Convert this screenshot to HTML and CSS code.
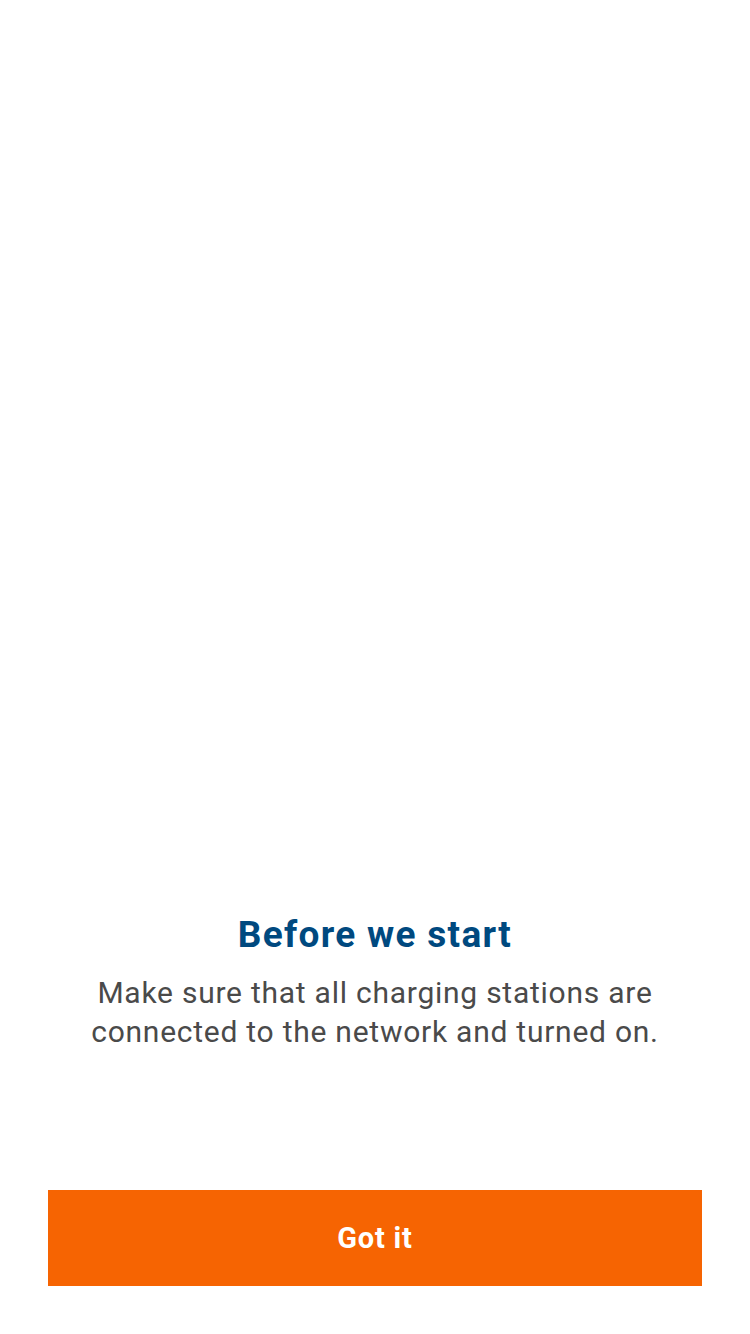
FILE: index.html
```html
<!DOCTYPE html>
<html lang="en">
<head>
<meta charset="utf-8">
<title>Before we start</title>
<link rel="stylesheet" href="styles.css">
</head>
<body>
<main class="screen">
  <div class="spacer"></div>
  <section class="intro">
    <h1 class="intro-title">Before we start</h1>
    <p class="intro-text">Make sure that all charging stations are connected to the network and turned on.</p>
  </section>
  <button class="primary-btn" type="button">Got it</button>
</main>
</body>
</html>
```

FILE: styles.css
```css
* { box-sizing: border-box; }
html, body {
  margin: 0;
  padding: 0;
  background: #ffffff;
}
body {
  font-family: Roboto, "Noto Sans", "Liberation Sans", sans-serif;
}
.screen {
  width: 750px;
  height: 1334px;
  display: flex;
  flex-direction: column;
  padding: 0 48px 48px;
}
.spacer {
  flex: 1;
}
.intro {
  display: flex;
  flex-direction: column;
  align-items: center;
  text-align: center;
  margin-bottom: 139px;
}
.intro-title {
  margin: 0 0 16px;
  font-size: 37px;
  line-height: 44px;
  font-weight: 700;
  letter-spacing: 1.3px;
  color: #00497f;
}
.intro-text {
  margin: 0;
  font-size: 30px;
  line-height: 39px;
  font-weight: 400;
  letter-spacing: 0.75px;
  color: #4a4a4a;
}
.primary-btn {
  height: 96px;
  width: 100%;
  border: none;
  border-radius: 0;
  background: #f66402;
  color: #ffffff;
  font-family: Roboto, "Noto Sans", "Liberation Sans", sans-serif;
  font-size: 29px;
  font-weight: 700;
  letter-spacing: 0.8px;
  cursor: pointer;
}
```
